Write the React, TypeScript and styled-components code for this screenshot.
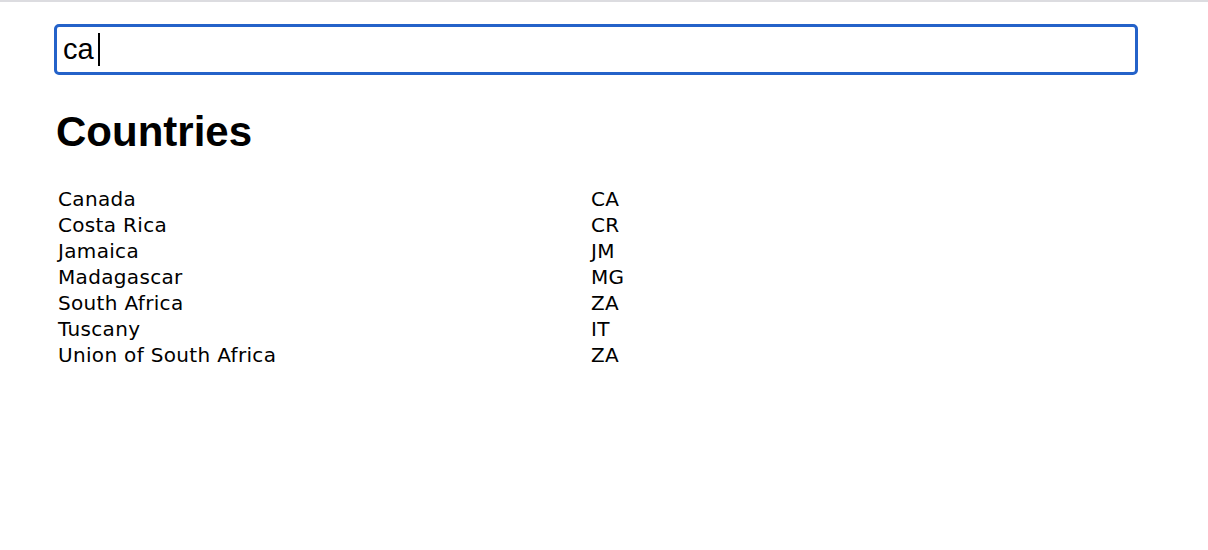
import React from "react";
import styled, { createGlobalStyle } from "styled-components";

const GlobalStyle = createGlobalStyle`
  body {
    margin: 0;
    background: #fff;
    color: #000;
    font-family: "Liberation Sans", Arial, sans-serif;
  }
`;

const Page = styled.div`
  border-top: 2px solid #dcdce0;
  padding: 22px 70px 0 54px;
`;

const SearchField = styled.div`
  height: 51px;
  box-sizing: border-box;
  border: 3px solid #2462c9;
  border-radius: 5px;
  padding: 0 6px;
  display: flex;
  align-items: center;
  font-size: 29px;
  font-family: "Liberation Sans", Arial, sans-serif;
`;

const Caret = styled.span`
  display: inline-block;
  width: 2px;
  height: 33px;
  margin-left: 4px;
  background: #000;
`;

const Heading = styled.h2`
  margin: 33px 0 0 2px;
  font-size: 42px;
  line-height: 48px;
  font-weight: 700;
`;

const Table = styled.div`
  margin-top: 30px;
  padding-left: 4px;
  display: grid;
  grid-template-columns: 533px auto;
  font-family: "DejaVu Sans", sans-serif;
  font-size: 20px;
  line-height: 26px;
  letter-spacing: 0.33px;
`;

const Cell = styled.div`
  white-space: nowrap;
`;

const countries = [
  ["Canada", "CA"],
  ["Costa Rica", "CR"],
  ["Jamaica", "JM"],
  ["Madagascar", "MG"],
  ["South Africa", "ZA"],
  ["Tuscany", "IT"],
  ["Union of South Africa", "ZA"],
];

export default function App() {
  return (
    <>
      <GlobalStyle />
      <Page>
        <SearchField>
          ca
          <Caret />
        </SearchField>
        <Heading>Countries</Heading>
        <Table>
          {countries.map(([name, code]) => (
            <React.Fragment key={name}>
              <Cell>{name}</Cell>
              <Cell>{code}</Cell>
            </React.Fragment>
          ))}
        </Table>
      </Page>
    </>
  );
}
